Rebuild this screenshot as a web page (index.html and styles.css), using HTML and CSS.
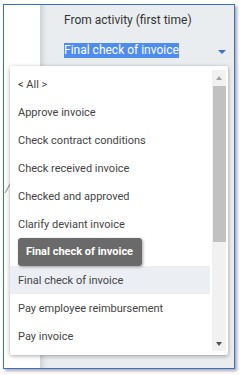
FILE: index.html
```html
<!DOCTYPE html>
<html>
<head>
<meta charset="utf-8">
<link rel="stylesheet" href="styles.css">
</head>
<body>
<div class="frame">
  <div class="gutter">
    <svg class="stroke" width="12" height="20" viewBox="0 0 12 20"><line x1="1" y1="17" x2="9" y2="3" stroke="#9aa0a6" stroke-width="1.2"/></svg>
  </div>
  <div class="panel">
    <div class="label">From activity (first time)</div>
    <div class="select">
      <span class="sel-text">Final check of invoice</span>
      <span class="caret"></span>
    </div>
  </div>
  <div class="popup">
    <ul class="list">
      <li>&lt; All &gt;</li>
      <li>Approve invoice</li>
      <li>Check contract conditions</li>
      <li>Check received invoice</li>
      <li>Checked and approved</li>
      <li>Clarify deviant invoice</li>
      <li class="under">Final check of invoice</li>
      <li class="hover">Final check of invoice</li>
      <li>Pay employee reimbursement</li>
      <li>Pay invoice</li>
    </ul>
    <div class="scrollbar">
      <div class="sb-btn"><span class="tri up"></span></div>
      <div class="sb-thumb"></div>
      <div class="sb-rest"></div>
      <div class="sb-btn"><span class="tri down"></span></div>
    </div>
    <div class="tooltip">Final check of invoice</div>
  </div>
</div>
</body>
</html>
```

FILE: styles.css
```css
html, body {
  margin: 0;
  padding: 0;
  background: #ffffff;
}
body {
  width: 240px;
  height: 375px;
  overflow: hidden;
  font-family: Roboto, "Liberation Sans", sans-serif;
}
.frame {
  position: relative;
  margin: 4px 0 0 3px;
  width: 230px;
  height: 363px;
  border: 1px solid #3a6fd0;
  box-shadow: 2px 2px 3px rgba(0,0,0,0.35);
  display: flex;
  background: #ffffff;
}
.gutter {
  width: 36px;
  position: relative;
  background: #ffffff;
}
.stroke {
  position: absolute;
  left: 0;
  top: 171px;
}
.panel {
  flex: 1;
  background: linear-gradient(to right, #cfd2d6 0px, #e4e7ea 5px, #eaedf0 8px);
  padding: 7px 0 0 24px;
  display: flex;
  flex-direction: column;
}
.label {
  font-size: 12px;
  line-height: 16px;
  color: #333;
}
.select {
  margin-top: 15px;
  display: flex;
  align-items: center;
  height: 15px;
}
.sel-text {
  background: #4e8cf0;
  color: #fff;
  font-size: 12px;
  line-height: 15px;
  height: 15px;
}
.caret {
  margin-left: auto;
  margin-right: 8px;
  margin-top: 3px;
  width: 0;
  height: 0;
  border-left: 4px solid transparent;
  border-right: 4px solid transparent;
  border-top: 4px solid #3a6fd0;
}
.popup {
  position: absolute;
  left: 6px;
  top: 61px;
  width: 216px;
  height: 281px;
  padding: 4px 2px 4px 0;
  background: #fff;
  border-radius: 2px;
  box-shadow: 0 1px 4px rgba(0,0,0,0.35);
  display: flex;
  gap: 2px;
}
.list {
  list-style: none;
  margin: 0;
  padding: 0;
  width: 200px;
}
.list li {
  height: 28px;
  box-sizing: border-box;
  padding-top: 1px;
  line-height: 27px;
  padding-left: 8px;
  font-size: 11px;
  color: #444;
  white-space: nowrap;
}
.list li.under {
  color: #bbb;
}
.list li.hover {
  background: #ebeff3;
}
.scrollbar {
  width: 14px;
  background: #f1f1f1;
  display: flex;
  flex-direction: column;
}
.sb-btn {
  height: 16px;
  display: flex;
  align-items: center;
  justify-content: center;
}
.sb-thumb {
  height: 156px;
  margin-left: 1px;
  background: #c1c1c1;
}
.sb-rest {
  flex: 1;
}
.tri {
  width: 0;
  height: 0;
  border-left: 3.5px solid transparent;
  border-right: 3.5px solid transparent;
}
.tri.up {
  border-bottom: 4px solid #a3a3a3;
}
.tri.down {
  border-top: 4px solid #505050;
  margin-top: 1px;
}
.tooltip {
  position: absolute;
  left: 8px;
  top: 172px;
  width: 116px;
  height: 28px;
  line-height: 28px;
  padding-left: 8px;
  background: rgba(98,98,98,0.95);
  color: #fff;
  font-size: 11px;
  font-weight: bold;
  border-radius: 3px;
  box-shadow: 1px 1px 3px rgba(0,0,0,0.35);
  white-space: nowrap;
}
```
